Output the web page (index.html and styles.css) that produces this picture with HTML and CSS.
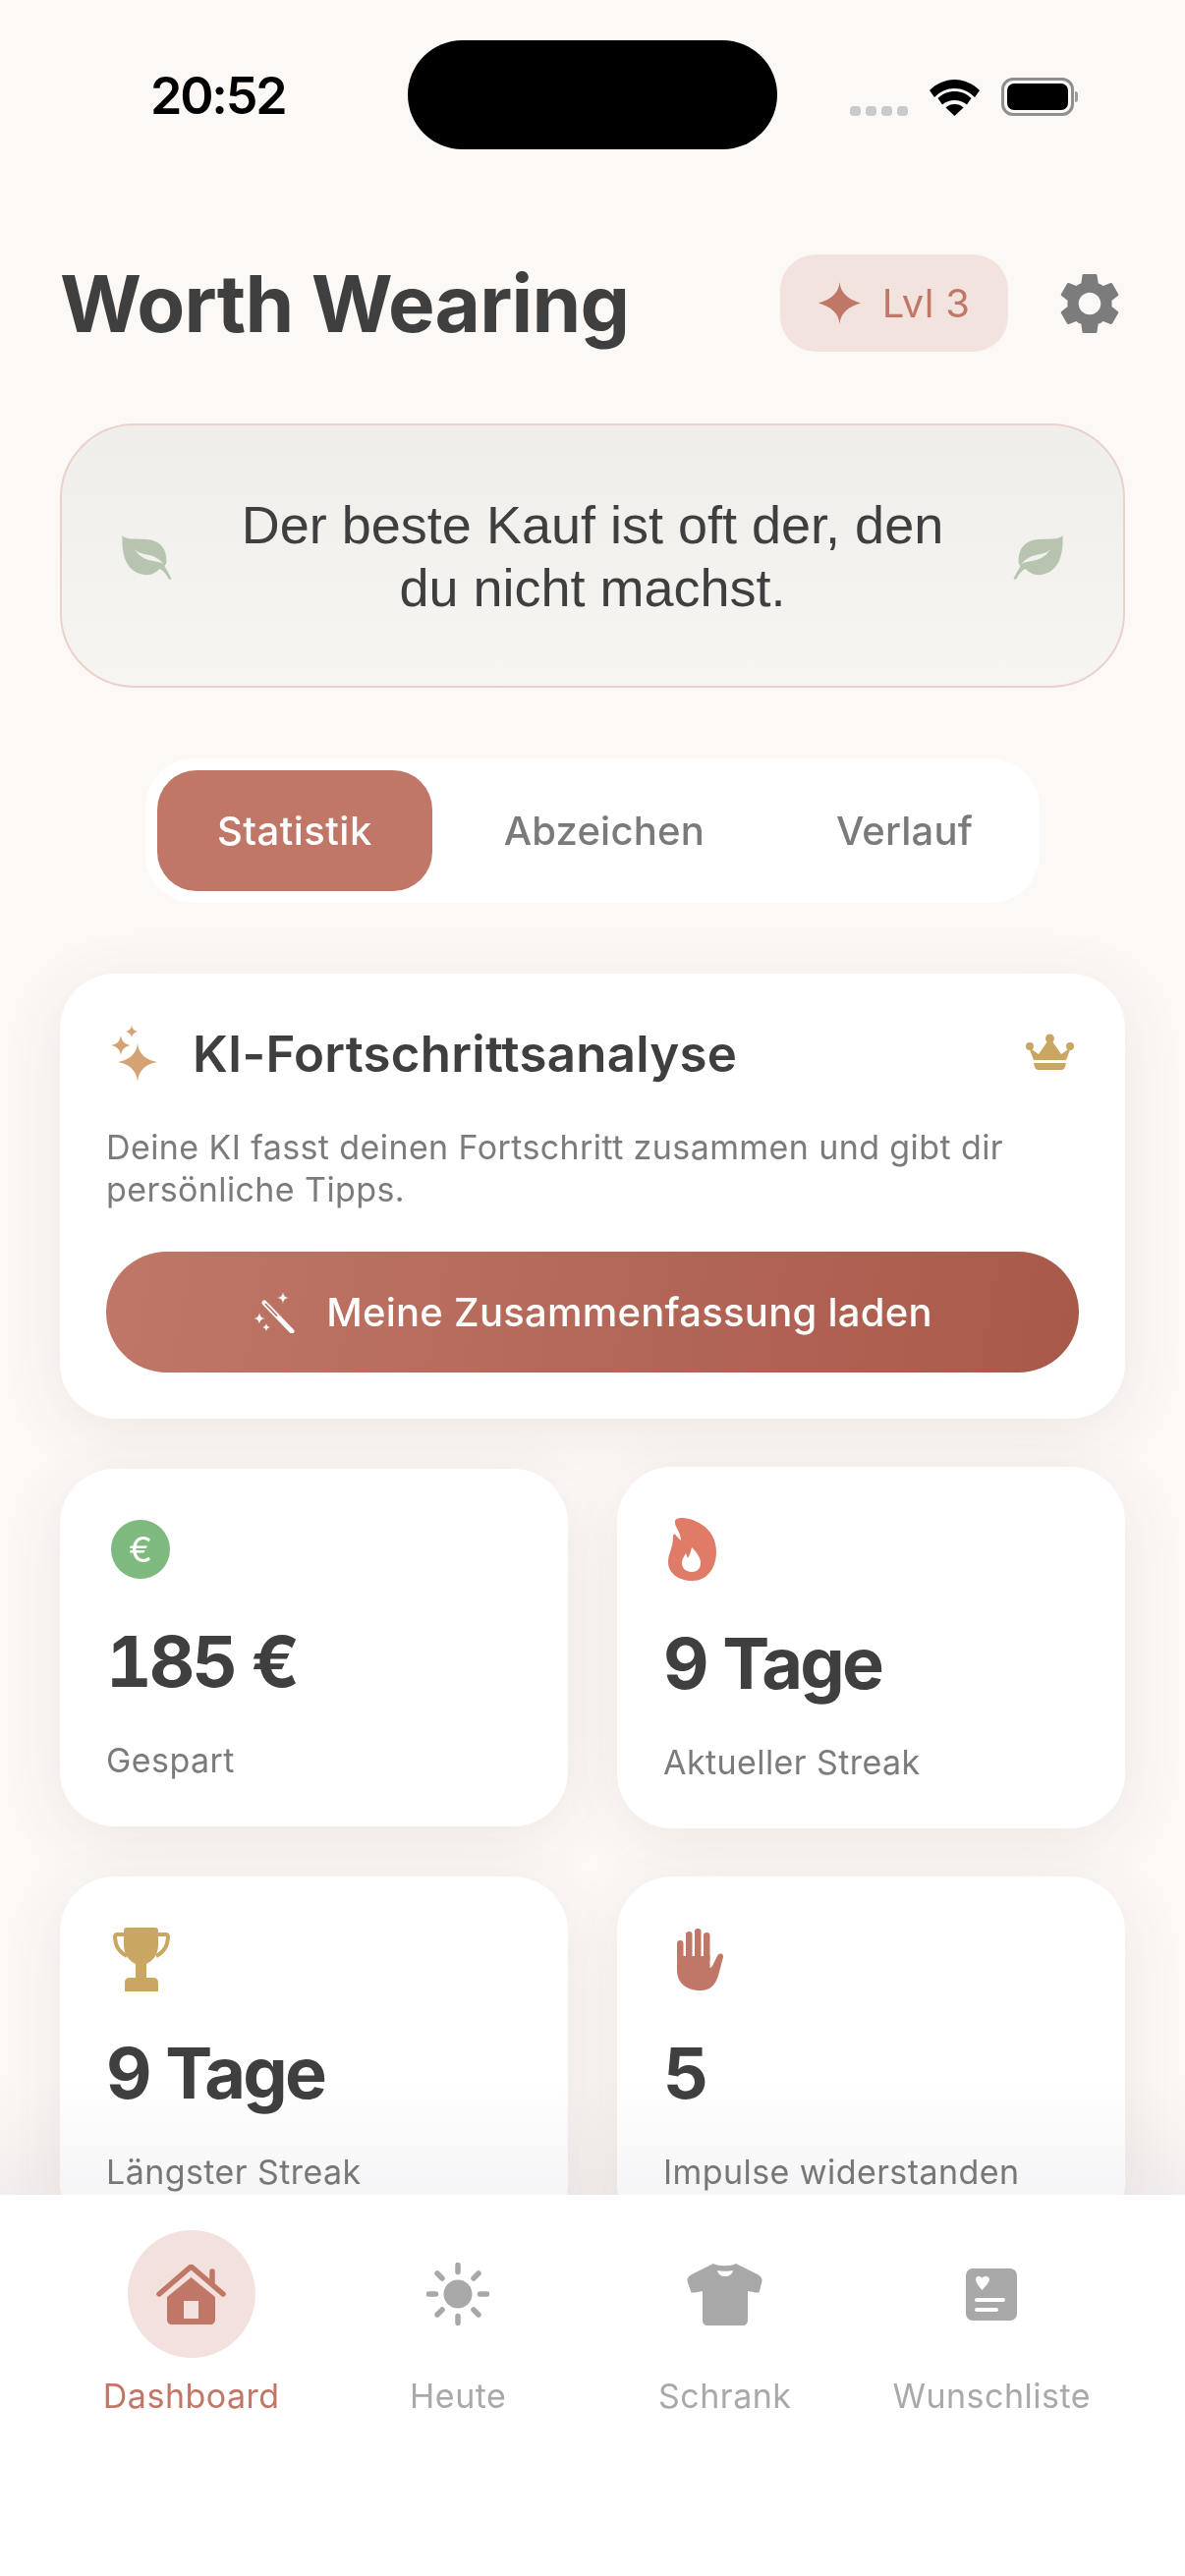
FILE: index.html
```html
<!DOCTYPE html>
<html lang="de">
<head>
<meta charset="utf-8">
<title>Worth Wearing</title>
<link rel="stylesheet" href="styles.css">
</head>
<body>
<div class="page">
  <div class="status">
    <span class="time">20:52</span>
    <div class="island"></div>
    <div class="status-icons">
      <div class="signal"><i></i><i></i><i></i><i></i></div>
      <svg class="wifi" viewBox="0 0 51 37"><path d="M25.5 0C35 0 44 4 51 11L46 18C40 12 33 9 25.5 9S11 12 5 18L0 11C7 4 16 0 25.5 0Z"/><path d="M25.5 13C32 13 38 15.500 42.500 20L38 26.500C34.500 23.500 30 22 25.500 22S16.500 23.500 13 26.500L8.500 20C13 15.500 19 13 25.500 13Z" transform="translate(0 -1)"/><path d="M25.500 25C29 25 32 26 34.500 28.500L25.500 37L16.500 28.500C19 26 22 25 25.500 25Z"/></svg>
      <div class="battery"><div class="battery-fill"></div></div>
    </div>
  </div>

  <main class="content">
    <header class="header">
      <h1 class="title">Worth Wearing</h1>
      <div class="level">
        <svg class="level-star" viewBox="-21 -21 42 42"><path d="M0-21C1-9 9-4 21 0 9 4 1 9 0 21-1 9-9 4-21 0-9-4-1-9 0-21Z"/></svg>
        <span>Lvl 3</span>
      </div>
      <svg class="gear" viewBox="2.500 1.800 19 20.400"><path d="M19.140 12.940c.04-.3.06-.61.06-.94 0-.32-.02-.64-.07-.94l2.030-1.580a.49.49 0 0 0 .12-.61l-1.920-3.320a.488.488 0 0 0-.59-.22l-2.390.96c-.5-.38-1.030-.7-1.620-.94l-.36-2.540a.484.484 0 0 0-.48-.41h-3.840c-.24 0-.43.17-.47.41l-.36 2.540c-.59.24-1.130.57-1.620.94l-2.390-.96c-.22-.08-.47 0-.59.22L2.740 8.870c-.12.21-.08.47.12.61l2.030 1.580c-.05.3-.09.63-.09.94s.02.64.07.94l-2.030 1.580a.49.49 0 0 0-.12.61l1.920 3.320c.12.22.37.29.59.22l2.390-.96c.5.38 1.030.7 1.620.94l.36 2.540c.05.24.24.41.48.41h3.840c.24 0 .44-.17.47-.41l.36-2.540c.59-.24 1.130-.56 1.620-.94l2.390.96c.22.08.47 0 .59-.22l1.920-3.320c.12-.22.07-.47-.12-.61l-2.010-1.580zM12 15.600c-1.980 0-3.600-1.620-3.600-3.600s1.620-3.600 3.600-3.600 3.600 1.620 3.600 3.600-1.620 3.600-3.600 3.600z"/></svg>
    </header>

    <section class="quote">
      <svg class="leaf" viewBox="0 0 52 46"><path class="leaf-body" d="M1 0C5 5 14 3 26 4 40 5 46 14 46 26 46 28 45 30 44 31 46 35 48 38 51 44 50 45 49 45 48 44 46 40 43 36 39 34 35 38 29 41 24 40 6 38 0 22 1 0Z"/><path class="leaf-vein" d="M13 13C20 23 31 15 43 29 35 24 22 29 13 13Z"/></svg>
      <p class="quote-text">Der beste Kauf ist oft der, den du nicht machst.</p>
      <svg class="leaf leaf-flip" viewBox="0 0 52 46"><path class="leaf-body" d="M1 0C5 5 14 3 26 4 40 5 46 14 46 26 46 28 45 30 44 31 46 35 48 38 51 44 50 45 49 45 48 44 46 40 43 36 39 34 35 38 29 41 24 40 6 38 0 22 1 0Z"/><path class="leaf-vein" d="M13 13C20 23 31 15 43 29 35 24 22 29 13 13Z"/></svg>
    </section>

    <nav class="tabs">
      <span class="tab tab-active">Statistik</span>
      <span class="tab">Abzeichen</span>
      <span class="tab">Verlauf</span>
    </nav>

    <section class="card ai-card">
      <div class="ai-head">
        <svg class="ai-spark" viewBox="0 0 47 57"><g class="spark-fill"><path d="M27 18C28 29 36 35 47 37 36 39 28 45 27 57 26 45 18 39 7 37 18 35 26 29 27 18Z"/><path d="M10 10C11 16 14 19 20 20 14 21 11 24 10 30 9 24 6 21 0 20 6 19 9 16 10 10Z"/><path d="M21 0C21.500 3 24 5.500 27 6 24 6.500 21.500 9 21 12 20.500 9 18 6.500 15 6 18 5.500 20.500 3 21 0Z"/></g></svg>
        <h2 class="ai-title">KI-Fortschrittsanalyse</h2>
        <svg class="crown" viewBox="0 0 49 37"><g class="crown-fill"><circle cx="24.500" cy="5" r="4.500"/><circle cx="4" cy="13" r="4"/><circle cx="45" cy="13" r="4"/><path d="M3 14L13 21 22 8H27L36 21 46 14 41 27H8Z"/><path d="M8 30H41L40 34C39.500 36 38 37 36 37H13C11 37 9.500 36 9 34Z"/></g></svg>
      </div>
      <p class="ai-desc">Deine KI fasst deinen Fortschritt zusammen und gibt dir persönliche Tipps.</p>
      <div class="ai-button">
        <svg class="wand" viewBox="0 0 43 42"><g class="wand-fill"><path d="M31 0C31.500 4 33 5.500 37 6 33 6.500 31.500 8 31 12 30.500 8 29 6.500 25 6 29 5.500 30.500 4 31 0Z"/><path d="M7 21C7.500 25 9 26.500 13 27 9 27.500 7.500 29 7 33 6.500 29 5 27.500 1 27 5 26.500 6.500 25 7 21Z"/><path d="M14 32C14.400 34.500 15.500 35.600 18 36 15.500 36.400 14.400 37.500 14 40 13.600 37.500 12.500 36.400 10 36 12.500 35.600 13.600 34.500 14 32Z"/></g><path class="wand-stick" d="M12 11L40 40"/><path class="wand-core" d="M13 12L25 24.500"/></svg>
        <span>Meine Zusammenfassung laden</span>
      </div>
    </section>

    <section class="stats">
      <article class="card stat">
        <div class="stat-icon"><span class="euro">€</span></div>
        <div class="stat-value">185 €</div>
        <div class="stat-label">Gespart</div>
      </article>
      <article class="card stat stat-tall">
        <div class="stat-icon"><svg class="flame" viewBox="0 0 49 64"><path fill-rule="evenodd" d="M7 3C8 0 12 0 15 0 35 2 49 16 49 34 49 52 39 64 25 64 10 64 0 56 0 45 0 36 5 31 5 19 5 16 7 16 8 18L13 23C13 14 6 9 7 3ZM24 30C30 36 33 41 33 46 33 52 29 55 24 55 18 55 14 51 14 46 14 42 17 38 18 36L20 41C22 38 23 34 24 30Z"/></svg></div>
        <div class="stat-value">9 Tage</div>
        <div class="stat-label">Aktueller Streak</div>
      </article>
      <article class="card stat stat-tall">
        <div class="stat-icon"><svg class="trophy" viewBox="0 0 58 65"><path class="trophy-fill" d="M14 0H43C45 0 46 1 46 3V18C46 28 40 34 34 37V51H41C44 51 46 53 46 56V65H12V56C12 53 14 51 17 51H23V37C17 34 11 28 11 18V3C11 1 12 0 14 0Z"/><path class="trophy-handle" d="M12 7H4C2.500 7 2 8 2 10 2.500 20 8 26 14 29M46 7H54C55.500 7 56 8 56 10 55.500 20 50 26 44 29"/></svg></div>
        <div class="stat-value">9 Tage</div>
        <div class="stat-label">Längster Streak</div>
      </article>
      <article class="card stat stat-tall">
        <div class="stat-icon"><svg class="palm" viewBox="0 0 47 63"><g class="palm-fill"><rect x="0" y="12" width="6.500" height="30" rx="3.200"/><rect x="9" y="3" width="6.500" height="30" rx="3.200"/><rect x="18" y="0" width="6.500" height="30" rx="3.200"/><rect x="27" y="4" width="6.500" height="30" rx="3.200"/><path d="M0 28H33.500V40C35 40 36 38 37 36L41 28C42 26 44 25 46 26 47 27 47 28 47 29L42 48C39 58 33 63 24 63 10 63 0 56 0 42Z"/></g></svg></div>
        <div class="stat-value">5</div>
        <div class="stat-label">Impulse widerstanden</div>
      </article>
    </section>
    <div class="fade"></div>
  </main>

  <footer class="tabbar">
    <div class="nav-item nav-active">
      <div class="nav-icon">
        <svg class="house" viewBox="0 0 71 61"><path class="house-roof" d="M3 30L35.500 2 68 30"/><path class="house-roof" d="M57 7V18"/><path class="house-body" fill-rule="evenodd" d="M35.500 13L60 33V56C60 59 58 61 55 61H16C13 61 11 59 11 56V33ZM28 37V55H43V37Z"/></svg>
      </div>
      <span class="nav-label">Dashboard</span>
    </div>
    <div class="nav-item">
      <div class="nav-icon">
        <svg class="sun" viewBox="0 0 64 64"><circle class="sun-core" cx="32" cy="32" r="14.500"/><path class="sun-rays" d="M32 2.500V9.500M32 54.500V61.500M2.500 32H9.500M54.500 32H61.500M11 11L16 16M48 48L53 53M53 11L48 16M16 48L11 53"/></svg>
      </div>
      <span class="nav-label">Heute</span>
    </div>
    <div class="nav-item">
      <div class="nav-icon">
        <svg class="shirt" viewBox="0 0 77 63"><path class="nav-fill" d="M27 0C32 3 45 3 50 0L72 11C75 13 77 15 76.500 18L74 28C74 30 72 30 62 28V57C62 61 60 63 57 63H21C18 63 16 61 16 57V28C6 30 4 30 4 28L.5 18C0 15 2 13 5 11Z"/><path class="nav-cut" d="M31 7C35 8 43 8 47 7 46 11 43 13 39 13 35 13 32 11 31 7Z"/></svg>
      </div>
      <span class="nav-label">Schrank</span>
    </div>
    <div class="nav-item">
      <div class="nav-icon">
        <svg class="wish" viewBox="0 0 52 53"><rect class="nav-fill" width="52" height="53" rx="7"/><path class="nav-cut" d="M16.500 22C13 18 10 14 10 11 10 8.500 12 8 13.500 8 15 8 16 9 16.500 10 17 9 18 8 19.500 8 21 8 24 8.500 24 11 24 14 20 18 16.500 22Z"/><rect class="nav-cut" x="9" y="30" width="31" height="4" rx="2"/><rect class="nav-cut" x="9" y="40" width="24" height="4" rx="2"/></svg>
      </div>
      <span class="nav-label">Wunschliste</span>
    </div>
  </footer>
</div>
</body>
</html>
```

FILE: styles.css
```css
* { box-sizing: border-box; }
html, body { margin: 0; padding: 0; }
body { font-family: "Inter", "Liberation Sans", sans-serif; background: #fcf8f5; color: #3f3f3f; }
h1, h2, p { margin: 0; }
svg { display: block; }

.page { width: 1206px; height: 2622px; display: flex; flex-direction: column; overflow: hidden; position: relative; background: #fcf8f5; }

/* status bar */
.status { height: 196px; flex: none; display: flex; align-items: center; justify-content: space-between; padding: 0 113px 0 153px; position: relative; }
.time { font-size: 52px; font-weight: 600; letter-spacing: -2.200px; color: #000; line-height: 1; }
.island { position: absolute; left: 415px; top: 41px; width: 376px; height: 111px; border-radius: 56px; background: #000; }
.status-icons { display: flex; align-items: flex-end; gap: 22px; }
.signal { display: flex; gap: 5px; }
.signal i { width: 11px; height: 10px; border-radius: 4px; background: #c9c9c9; display: block; }
.wifi { width: 51px; height: 37px; fill: #000; }
.battery { width: 74px; height: 39px; border: 3px solid #8f8f8f; border-radius: 12px; padding: 3px; position: relative; }
.battery::after { content: ""; position: absolute; right: -7px; top: 11px; width: 3px; height: 11px; border-radius: 0 3px 3px 0; background: #9a9a9a; }
.battery-fill { height: 100%; background: #000; border-radius: 7px; }

/* content */
.content { flex: 1; min-height: 0; overflow: hidden; position: relative; padding: 63px 61px 0 61px; display: flex; flex-direction: column; }
.header { display: flex; align-items: center; height: 99px; flex: none; }
.title { flex: 1; font-size: 80px; font-weight: 700; letter-spacing: -0.800px; line-height: 99px; color: #3f3f3f; white-space: nowrap; }
.level { width: 232px; height: 99px; border-radius: 36px; background: #f3e3df; display: flex; align-items: center; justify-content: center; gap: 22px; color: #c07767; font-size: 40px; font-weight: 400; letter-spacing: .3px; }
.level-star { width: 43px; height: 43px; fill: #c07767; }
.gear { width: 62px; height: 64px; fill: #7c7c7c; margin-left: 52px; margin-right: 5px; }

.quote { flex: none; margin-top: 73px; height: 269px; border: 2px solid #ead2ca; border-radius: 76px; background: linear-gradient(180deg, #efeeea, #f6f5f1); display: flex; align-items: center; padding: 0 60px; }
.leaf { width: 53px; height: 46px; flex: none; margin-top: 4px; }
.leaf-flip { transform: scaleX(-1); }
.leaf-body { fill: #b7c5b0; }
.leaf-vein { fill: #f2f1ed; }
.quote-text { flex: 1; padding: 0 46px; text-align: center; font-family: "Liberation Sans", Arial, sans-serif; font-size: 54px; line-height: 64px; color: #3f3f3f; }

.tabs { flex: none; align-self: flex-start; margin: 72px 0 0 87px; width: 910px; height: 147px; background: #fff; border-radius: 50px; padding: 12px; display: flex; gap: 12px; }
.tab { padding: 0 61px; display: flex; align-items: center; font-size: 40px; font-weight: 500; letter-spacing: .2px; color: #7a7a7a; border-radius: 40px; white-space: nowrap; }
.tab-active { background: #c07767; color: #fff; letter-spacing: .45px; }

.card { background: #fff; border-radius: 56px; box-shadow: 0 12px 64px rgba(95, 70, 50, 0.09); }
.ai-card { flex: none; margin-top: 72px; height: 453px; padding: 46px 47px 47px 47px; }
.ai-head { height: 70px; display: flex; align-items: center; }
.ai-spark { width: 47px; height: 57px; margin-left: 5px; margin-right: 36px; flex: none; }
.spark-fill { fill: #d4a373; }
.ai-title { flex: 1; font-size: 51px; font-weight: 600; letter-spacing: .25px; color: #3f3f3f; }
.crown { width: 49px; height: 37px; flex: none; margin-right: 5px; margin-top: -3px; }
.crown-fill { fill: #c9a662; }
.ai-desc { margin-top: 39px; font-size: 34px; line-height: 43px; letter-spacing: .4px; color: #7b7b7b; }
.ai-button { margin-top: 42px; height: 123px; border-radius: 62px; background: linear-gradient(100deg, #c07767, #a8594a); display: flex; align-items: center; justify-content: center; gap: 32px; color: #fff; font-size: 40px; font-weight: 500; letter-spacing: .25px; }
.wand { width: 43px; height: 42px; flex: none; }
.wand-fill { fill: #fff; }
.wand-stick { stroke: #fff; stroke-width: 5; stroke-linecap: round; fill: none; }
.wand-core { stroke: #b87060; stroke-width: 1.800; fill: none; }

.stats { flex: none; margin-top: 49px; display: grid; grid-template-columns: 517px 517px; column-gap: 50px; row-gap: 49px; align-items: center; }
.stat { padding: 52px 46px 47px 47px; }
.stat-icon { height: 60px; display: flex; align-items: center; }
.stat-tall .stat-icon { height: 64px; }
.euro { width: 60px; height: 60px; margin-left: 5px; border-radius: 50%; background: #7eb97f; color: #fff; font-size: 36px; line-height: 60px; text-align: center; }
.flame { width: 49px; height: 64px; fill: #e07b67; margin-left: 5px; }
.trophy { width: 58px; height: 65px; margin-left: 7px; }
.trophy-fill { fill: #c9a662; }
.trophy-handle { fill: none; stroke: #c9a662; stroke-width: 4; }
.palm { width: 47px; height: 63px; margin-left: 14px; }
.palm-fill { fill: #c07767; }
.stat-value { margin-top: 40px; font-size: 72px; font-weight: 700; line-height: 87px; letter-spacing: -2.800px; font-variant-numeric: tabular-nums; color: #3f3f3f; }
.stat-label { margin-top: 37px; font-size: 34px; line-height: 41px; letter-spacing: .42px; color: #7b7b7b; }

.fade { position: absolute; left: 0; right: 0; bottom: 0; height: 120px; background: linear-gradient(180deg, #fff, #f5f5f7); mix-blend-mode: multiply; }

/* tab bar */
.tabbar { flex: none; height: 388px; background: #fff; padding: 36px 59px 0; display: grid; grid-template-columns: repeat(4, 271.500px); align-items: start; position: relative; }
.nav-item { display: flex; flex-direction: column; align-items: center; gap: 18px; }
.nav-icon { width: 130px; height: 130px; border-radius: 50%; display: flex; align-items: center; justify-content: center; }
.nav-active .nav-icon { background: #f3e1dd; }
.nav-label { font-size: 34px; line-height: 41px; letter-spacing: .5px; color: #a9a9a9; white-space: nowrap; }
.nav-active .nav-label { color: #c07767; }
.house { width: 71px; height: 61px; }
.house-roof { fill: none; stroke: #c07767; stroke-width: 5.500; stroke-linecap: round; stroke-linejoin: round; }
.house-body { fill: #c07767; }
.sun { width: 64px; height: 64px; }
.sun-core { fill: #a8a8a8; }
.sun-rays { stroke: #a8a8a8; stroke-width: 5.500; stroke-linecap: round; fill: none; }
.shirt { width: 77px; height: 63px; }
.wish { width: 52px; height: 53px; }
.nav-fill { fill: #a8a8a8; }
.nav-cut { fill: #fff; }
```
